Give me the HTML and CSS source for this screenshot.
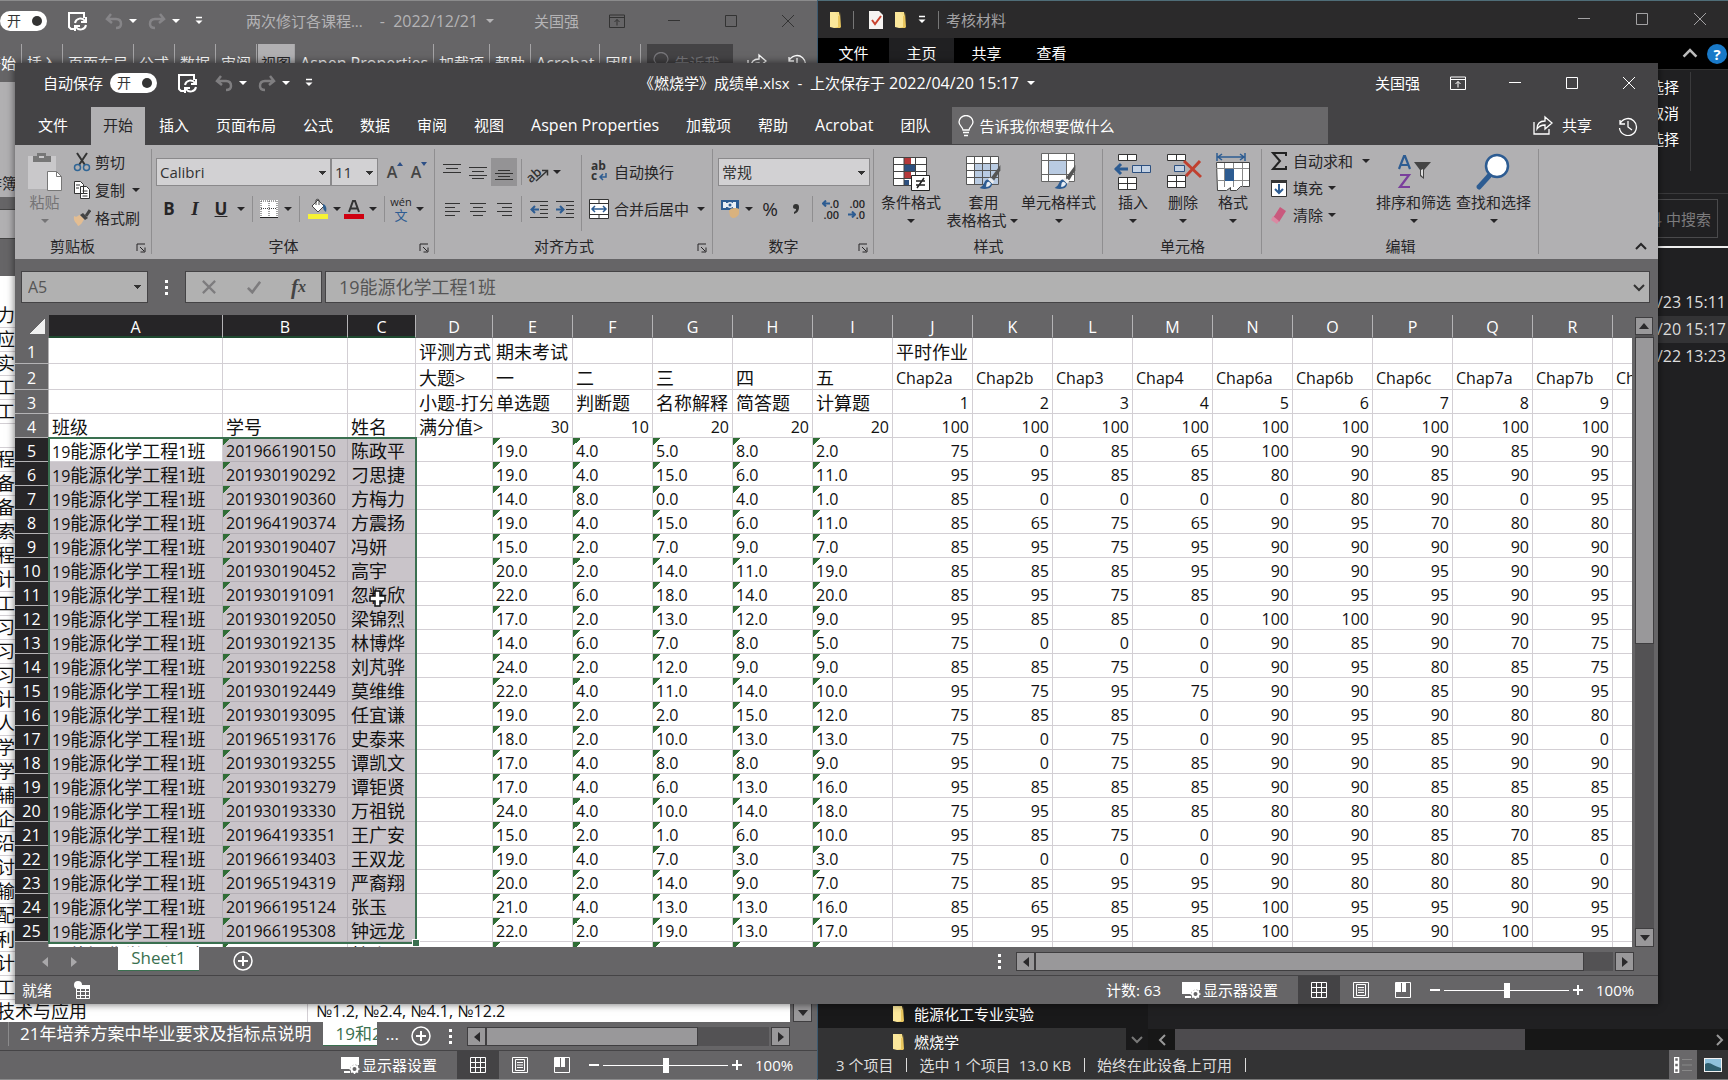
FILE: index.html
```html
<!DOCTYPE html>
<html lang="zh-CN">
<head>
<meta charset="utf-8">
<title>《燃烧学》成绩单.xlsx - Excel</title>
<link rel="stylesheet" href="styles.css">
</head>
<body>
<svg class="defs" aria-hidden="true">
  <symbol id="i-save" viewBox="0 0 20 20"><path d="M8 18H4l-2-2V2h15v5" fill="none" stroke="currentColor" stroke-width="2"/><path d="M8 14v4" stroke="currentColor" stroke-width="2"/><path d="M8 12a5.500 5.500 0 0 1 10-2M19 6v5h-5M19 14a5.500 5.500 0 0 1-10 2M8 20v-5h5" fill="none" stroke="currentColor" stroke-width="2"/></symbol>
  <symbol id="i-undo" viewBox="0 0 18 18"><path d="M6 2 2 7l5 4M2 7h9c4 0 5 3 5 5s-1 4-5 4" fill="none" stroke="currentColor" stroke-width="2.500"/></symbol>
  <symbol id="i-redo" viewBox="0 0 18 18"><path d="m12 2 4 5-5 4M16 7H7c-4 0-5 3-5 5s1 4 5 4" fill="none" stroke="currentColor" stroke-width="2.500"/></symbol>
  <symbol id="i-custom" viewBox="0 0 12 12"><path d="M3 2.500h6" stroke="currentColor" stroke-width="1.500"/><path d="M2.500 5.500h7L6 9z" fill="currentColor"/></symbol>
  <symbol id="i-ropt" viewBox="0 0 16 14"><path d="M.5 1h15v12.500H.5zM.5 3.500h15M8 11.500V5.500M5.500 8 8 5.500 10.500 8" fill="none" stroke="currentColor"/></symbol>
  <symbol id="i-min" viewBox="0 0 14 14"><path d="M1 6.500h12" stroke="currentColor"/></symbol>
  <symbol id="i-max" viewBox="0 0 14 14"><path d="M1.500 1.500h11v11h-11z" fill="none" stroke="currentColor"/></symbol>
  <symbol id="i-close" viewBox="0 0 14 14"><path d="m1 1 12 12M13 1 1 13" stroke="currentColor"/></symbol>
  <symbol id="i-bulb" viewBox="0 0 16 22"><path d="M5 15c0-3-4-4-4-8a7 6.500 0 0 1 14 0c0 4-4 5-4 8zM5 17.500h6M6 20.500h4" fill="none" stroke="currentColor" stroke-width="1.300"/></symbol>
  <symbol id="i-share" viewBox="0 0 20 20"><path d="M1 7v12h15v-5M12 2l7 6-7 6v-4c-4 0-6 1-8 4 0-5 3-8 8-8z" fill="none" stroke="currentColor" stroke-width="1.300"/></symbol>
  <symbol id="i-hist" viewBox="0 0 20 20"><path d="M2 4v4h5M2 8a8.500 8.500 0 1 1-.5 4M10 5v6l4 3" fill="none" stroke="currentColor" stroke-width="1.300"/></symbol>
  <symbol id="i-launch" viewBox="0 0 10 10"><path d="M1 8V1h8M4 4l4 4M9 4.500V9H4.500" fill="none" stroke="currentColor"/></symbol>
  <symbol id="i-plus" viewBox="0 0 20 20"><circle cx="10" cy="10" r="9" fill="none" stroke="currentColor" stroke-width="1.500"/><path d="M10 5v10M5 10h10" stroke="currentColor" stroke-width="2"/></symbol>
  <symbol id="i-disp" viewBox="0 0 20 18"><path d="M1 1h18v8h-2a5 5 0 0 0-7 4H1zM4 15h6v2H4z" fill="currentColor"/><circle cx="14.500" cy="13" r="3" fill="none" stroke="currentColor" stroke-width="2"/><path d="M14.500 8v2m0 6v2m-5-5h2m6 0h2m-8.500-3.500 1.500 1.500m4 4 1.500 1.500m0-7-1.500 1.500m-4 4-1.500 1.500" stroke="currentColor" stroke-width="1.500"/></symbol>
  <symbol id="i-grid" viewBox="0 0 16 16"><path d="M.5.500h15v15H.5zM5.500 0v16M10.500 0v16M0 5.500h16M0 10.500h16" fill="none" stroke="currentColor"/></symbol>
  <symbol id="i-page" viewBox="0 0 16 16"><path d="M.5.500h15v15H.5zM3.500 2.500h9v11h-9zM5 5.500h6M5 8h6M5 10.500h6" fill="none" stroke="currentColor"/></symbol>
  <symbol id="i-break" viewBox="0 0 16 16"><path d="M.5.500h15v15H.5z" fill="none" stroke="currentColor"/><path d="M1 1h5v9H1zM7 1h4v9H7z" fill="currentColor"/></symbol>
  <symbol id="i-folder" viewBox="0 0 14 18"><path d="M1 1h9v15H1z" fill="#f7e08a"/><path d="M6 5h4l1-4 1 15-1 1H5z" fill="#e9c65e"/><path d="M1 1h5l3 4v11l-4 1-4-1z" fill="#fbe79b"/></symbol>
  <symbol id="i-chev" viewBox="0 0 14 14"><path d="m2 9 5-5 5 5" fill="none" stroke="currentColor" stroke-width="2"/></symbol>
  <symbol id="i-brush" viewBox="0 0 22 26"><path d="m21 1-9 12 3 3 6-10z" fill="#555"/><path d="m11 13 4 4-2 2-4-4z" fill="#eee"/><path d="M9 15c-4 0-3 6-8 8 5 2 12 1 12-4z" fill="#2d5c92"/><path d="M10 17c-3 0-2 3-3 5 3 0 4-1 5-3z" fill="#e8eef5"/></symbol>
</svg>

<main class="desktop">

<section class="win back" aria-label="两次修订各课程">
  <header class="title">
    <span class="auto">自动保存</span>
    <button class="toggle" aria-label="自动保存 开">开<i></i></button>
    <button class="q save"><svg><use href="#i-save"/></svg></button>
    <button class="q undo"><svg><use href="#i-undo"/></svg></button><i class="caret"></i>
    <button class="q redo"><svg><use href="#i-redo"/></svg></button><i class="caret"></i>
    <button class="q custom"><svg><use href="#i-custom"/></svg></button>
    <h1><span class="doc">两次修订各课程...</span><span class="lat">-&nbsp; 2022/12/21</span><i class="caret"></i></h1>
    <span class="user">关国强</span>
    <button class="sys"><svg class="wide"><use href="#i-ropt"/></svg></button>
    <button class="sys"><svg><use href="#i-min"/></svg></button>
    <button class="sys"><svg><use href="#i-max"/></svg></button>
    <button class="sys"><svg><use href="#i-close"/></svg></button>
  </header>
  <nav class="tabs">
    <button>文件</button><button>开始</button><button>插入</button><button>页面布局</button><button>公式</button><button>数据</button><button>审阅</button><button class="on">视图</button><button class="lat">Aspen Properties</button><button>加载项</button><button>帮助</button><button class="lat">Acrobat</button><button>团队</button>
    <div class="tell"><svg><use href="#i-bulb"/></svg><span>告诉我</span></div>
    <button class="ico"><svg><use href="#i-share"/></svg></button>
    <button class="ico"><svg><use href="#i-hist"/></svg></button>
  </nav>
  <div class="back-ribbon"><span>作簿</span></div>
  <div class="back-formula"><div></div></div>
  <div class="back-sheet">
    <ul>
      <li>力<li>应<li>实<li>工<li>工<li><li>程<li>备<li>备<li>索<li>程<li>计<li>工<li>习<li>习<li>习<li>计<li>人<li>学<li>学<li>辅<li>企<li>沿<li>讨<li>输<li>配<li>利<li>计<li>工<li class="full"><span>技术与应用</span><span class="codes">№1.2, №2.4, №4.1, №12.2</span>
    </ul>
    <div class="vbar"><button class="arrow down" aria-label="向下"></button></div>
  </div>
  <div class="sheets">
    <button class="sheet plain">21年培养方案中毕业要求及指标点说明</button>
    <button class="sheet cur">19和2</button>
    <span class="dots3">...</span>
    <button class="add"><svg><use href="#i-plus"/></svg></button>
    <i class="grip"></i>
    <div class="hbar"><button class="arrow left" aria-label="向左"></button><div class="track"><i></i></div><button class="arrow right" aria-label="向右"></button></div>
  </div>
  <footer class="status">
    <button class="disp"><svg><use href="#i-disp"/></svg>显示器设置</button>
    <button class="view on"><svg><use href="#i-grid"/></svg></button>
    <button class="view"><svg><use href="#i-page"/></svg></button>
    <button class="view"><svg><use href="#i-break"/></svg></button>
    <button class="zm minus" aria-label="缩小"></button>
    <input type="range" min="0" max="100" value="50" aria-label="缩放">
    <button class="zm add-zoom" aria-label="放大"></button>
    <span class="pct">100%</span>
  </footer>
</section>

<section class="explorer" aria-label="考核材料">
  <header class="x-title">
    <svg class="fold"><use href="#i-folder"/></svg><i class="bar"></i>
    <svg class="doc-check" viewBox="0 0 14 18"><path d="M0 0h10l4 4v14H0z" fill="#f6f4f2"/><path d="m3 9 3 4 6-8" fill="none" stroke="#c8432f" stroke-width="2"/></svg>
    <svg class="fold"><use href="#i-folder"/></svg>
    <svg class="cu"><use href="#i-custom"/></svg><i class="bar"></i>
    <span>考核材料</span>
    <button class="sys"><svg><use href="#i-min"/></svg></button>
    <button class="sys"><svg><use href="#i-max"/></svg></button>
    <button class="sys"><svg><use href="#i-close"/></svg></button>
  </header>
  <nav class="x-tabs"><button>文件</button><button class="on">主页</button><button>共享</button><button>查看</button>
    <svg class="up"><use href="#i-chev"/></svg><b class="help">?</b></nav>
  <div class="x-ribbon"><div><span>全部选择</span><span>全部取消</span><span>反向选择</span></div></div>
  <div class="x-address"><label for="xs" class="sr">搜索</label><input id="xs" placeholder="在 考核材料 中搜索"></div>
  <div class="x-body">
    <div class="x-nav">
      <a href="#"><svg><use href="#i-folder"/></svg>能源化工专业实验</a>
      <a href="#" class="on"><svg><use href="#i-folder"/></svg>燃烧学</a>
      <button class="x-down" aria-label="向下"><svg><use href="#i-chev"/></svg></button>
    </div>
    <div class="x-files">
      <ol><li>2022/12/23 15:11</li><li class="on">2022/04/20 15:17</li><li>2022/12/22 13:23</li></ol>
      <div class="x-scroll"><svg class="l"><use href="#i-chev"/></svg><div><i></i></div><svg class="r"><use href="#i-chev"/></svg></div>
    </div>
  </div>
  <footer class="x-status"><span>3 个项目</span><i></i><span>选中 1 个项目&nbsp; 13.0 KB</span><i></i><span>始终在此设备上可用</span><i></i>
    <button class="on" aria-label="详细信息"><svg viewBox="0 0 18 16"><path d="M.5.500h4v4h-4zM.5 6h4v4h-4zM.5 11.500h4v4h-4z" fill="none" stroke="#fff" stroke-width="1.500"/><path d="M8 2.500h10M8 8h10M8 13.500h10" stroke="#888"/></svg></button>
    <button aria-label="大图标"><svg viewBox="0 0 18 14"><path d="M0 0h18v14H0z" fill="#f2f2f2"/><path d="M1 1h16v12H1z" fill="#8fc1dc"/><path d="M1 6c5-3 8 2 16 4v3H1z" fill="#2f5e6e"/></svg></button>
  </footer>
</section>

<section class="win front" aria-label="《燃烧学》成绩单.xlsx">
  <header class="title">
    <span class="auto">自动保存</span>
    <button class="toggle" aria-label="自动保存 开">开<i></i></button>
    <button class="q save"><svg><use href="#i-save"/></svg></button>
    <button class="q undo"><svg><use href="#i-undo"/></svg></button><i class="caret"></i>
    <button class="q redo"><svg><use href="#i-redo"/></svg></button><i class="caret"></i>
    <button class="q custom"><svg><use href="#i-custom"/></svg></button>
    <h1><span>《燃烧学》成绩单.xlsx&nbsp; -&nbsp; 上次保存于 <span class="lat">2022/04/20 15:17</span></span><i class="caret"></i></h1>
    <span class="user">关国强</span>
    <button class="sys"><svg class="wide"><use href="#i-ropt"/></svg></button>
    <button class="sys"><svg><use href="#i-min"/></svg></button>
    <button class="sys"><svg><use href="#i-max"/></svg></button>
    <button class="sys"><svg><use href="#i-close"/></svg></button>
  </header>
  <nav class="tabs">
    <button class="file">文件</button><button class="on">开始</button><button>插入</button><button>页面布局</button><button>公式</button><button>数据</button><button>审阅</button><button>视图</button><button class="lat">Aspen Properties</button><button>加载项</button><button>帮助</button><button class="lat">Acrobat</button><button>团队</button>
    <div class="tell"><svg><use href="#i-bulb"/></svg><input aria-label="告诉我你想要做什么" placeholder="告诉我你想要做什么"></div>
    <button class="share"><svg><use href="#i-share"/></svg>共享</button>
    <button class="ico"><svg><use href="#i-hist"/></svg></button>
  </nav>

  <div class="ribbon">
    <section class="grp g-clip">
      <div class="body">
        <button class="big dim"><svg viewBox="0 0 34 38"><path d="M0 3h28v33H0z" fill="#c9c8ca"/><path d="M5 3h4V0h9v3h5v6H5z" fill="#777"/><path d="M11 3h5v2h-5z" fill="#c9c8ca"/><path d="M19.500 18.500h9l5 5v14h-14z" fill="#fff" stroke="#777"/><path d="M28.500 18.500v5h5" fill="none" stroke="#777"/></svg><span>粘贴</span><i class="caret"></i></button>
        <div class="stack">
          <button><svg viewBox="0 0 18 20"><path d="m4 1 8 12M14 1 6 13" stroke="#333" stroke-width="2"/><circle cx="4.500" cy="15.500" r="3" fill="none" stroke="#2f6595" stroke-width="1.500"/><circle cx="13.500" cy="15.500" r="3" fill="none" stroke="#2f6595" stroke-width="1.500"/></svg>剪切</button>
          <button><svg viewBox="0 0 18 20"><path d="M1.500 1.500h6l3 3v9h-9zM7.500 6.500h6l3 3v9h-9z" fill="#fff" stroke="#333"/><path d="M3 5h4M3 8h3M9.500 11h5M9.500 13.500h5M9.500 16h5" stroke="#333"/></svg>复制<i class="caret"></i></button>
          <button><svg viewBox="0 0 18 20"><path d="M1 8c3 2 4-1 6-1l4 4c-1 3-4 7-6 7-1-3-5-4-4-10z" fill="#e3bd92"/><path d="m7 7 3-2 5 5-3 2z" fill="#444"/><path d="m13 8 4-6" stroke="#444" stroke-width="3"/></svg>格式刷</button>
        </div>
      </div>
      <h2>剪贴板</h2><button class="launch"><svg><use href="#i-launch"/></svg></button>
    </section>

    <section class="grp g-font">
      <div class="body rows">
        <div class="row"><select class="fontname" aria-label="字体"><option>Calibri</option></select><select class="fontsize" aria-label="字号"><option>11</option></select>
          <button class="t fs">A<svg viewBox="0 0 6 4"><path d="m0 4 3-4 3 4z" fill="#2d4f86"/></svg></button><button class="t fs">A<svg viewBox="0 0 6 4"><path d="m0 0 3 4 3-4z" fill="#2d4f86"/></svg></button></div>
        <div class="row">
          <button class="t w26"><b>B</b></button><button class="t w26"><b class="it">I</b></button><button class="t w26"><b class="un">U</b></button><i class="caret"></i><i class="sep"></i>
          <button class="t"><svg viewBox="0 0 18 18"><path d="M0 0h18v18H0z" fill="#fff"/><path d="M1 1h16v15M1 1v15M9 1v15M1 8.500h16" fill="none" stroke="#444" stroke-dasharray="1 1"/><path d="M0 17.500h18" stroke="#222"/></svg></button><i class="caret"></i><i class="sep"></i>
          <button class="t w28"><svg class="s20" viewBox="0 0 20 20"><path d="m4 7 6-6 6 6-6 6z" fill="#fff" stroke="#444"/><path d="M8 6V1c0-1 3-1 3 0v5" fill="none" stroke="#444"/><path d="M15 5c3 1 4 4 3 8-2-1-3-3-3-6z" fill="#2f5f8f"/><path d="M0 15h20v5H0z" fill="#f7f335"/></svg></button><i class="caret tight"></i>
          <button class="t"><svg class="s20" viewBox="0 0 20 20"><path d="m5 13 4-11h2l4 11M6.500 9.500h7" fill="none" stroke="#333" stroke-width="2"/><path d="M0 15h20v5H0z" fill="#cf0010"/></svg></button><i class="caret"></i><i class="sep"></i>
          <button class="t wen"><small>wén</small><em>文</em></button><i class="caret"></i>
        </div>
      </div>
      <h2>字体</h2><button class="launch"><svg><use href="#i-launch"/></svg></button>
    </section>

    <section class="grp g-align">
      <div class="body">
        <div class="rows">
          <div class="row">
            <button class="t w26"><svg viewBox="0 0 18 18"><path d="M0 1.500h18M3 5.500h12M0 9.500h18" stroke="#333"/></svg></button>
            <button class="t w26"><svg viewBox="0 0 18 18"><path d="M0 4.500h18M3 8.500h12M0 12.500h18M3 15.500h12" stroke="#333"/></svg></button>
            <button class="t w26 on"><svg viewBox="0 0 18 18"><path d="M3 7.500h12M0 10.500h18M3 13.500h12M0 16.500h18" stroke="#333"/></svg></button><i class="sep"></i>
            <button class="t w26"><svg class="s20" viewBox="0 0 20 20"><text x="-3" y="15" font-size="13" font-weight="600" transform="rotate(-42 8 12)" fill="#333">ab</text><path d="m7 19 11-10M13 8.500l5.500 0v5" fill="none" stroke="#333" stroke-width="1.500"/></svg></button><i class="caret tight"></i>
          </div>
          <div class="row">
            <button class="t w26"><svg viewBox="0 0 18 18"><path d="M2 3.500h15M2 7.500h10M2 11.500h15M2 15.500h10" stroke="#333"/></svg></button>
            <button class="t w26"><svg viewBox="0 0 18 18"><path d="M1 3.500h16M4 7.500h10M1 11.500h16M4 15.500h10" stroke="#333"/></svg></button>
            <button class="t w26"><svg viewBox="0 0 18 18"><path d="M2 3.500h15M7 7.500h10M2 11.500h15M7 15.500h10" stroke="#333"/></svg></button><i class="sep"></i>
            <button class="t w26"><svg viewBox="0 0 18 18"><path d="M0 1.500h18M10 5.500h8M10 9.500h8M10 13.500h8M0 17.500h18" stroke="#333"/><path d="M9 9.500H2M5 6 1.500 9.500 5 13" fill="none" stroke="#2d5c92" stroke-width="2"/></svg></button>
            <button class="t w26"><svg viewBox="0 0 18 18"><path d="M0 1.500h18M10 5.500h8M10 9.500h8M10 13.500h8M0 17.500h18" stroke="#333"/><path d="M0 9.500h7M4 6l3.500 3.500L4 13" fill="none" stroke="#2d5c92" stroke-width="2"/></svg></button>
          </div>
        </div>
        <i class="vsep"></i>
        <div class="rows">
          <button class="lab"><svg viewBox="0 0 20 20"><text x="2" y="8" font-size="12" font-weight="bold" fill="#333">ab</text><text x="2" y="18" font-size="12" font-weight="bold" fill="#333">c</text><path d="M17 11v4h-6m3-3-3 3 3 3" fill="none" stroke="#2d5c92" stroke-width="1.500"/></svg>自动换行</button>
          <button class="lab"><svg viewBox="0 0 20 20"><path d="M.5.500h19v19H.5zM0 4.500h20M0 15.500h20M10 0v4M10 16v4" fill="#fff" stroke="#333"/><path d="M3 10h14M6 7l-3 3 3 3M14 7l3 3-3 3" fill="none" stroke="#2d5c92" stroke-width="1.500"/></svg>合并后居中<i class="caret"></i></button>
        </div>
      </div>
      <h2>对齐方式</h2><button class="launch"><svg><use href="#i-launch"/></svg></button>
    </section>

    <section class="grp g-num">
      <div class="body rows">
        <div class="row"><select class="numfmt" aria-label="数字格式"><option>常规</option></select></div>
        <div class="row">
          <button class="t"><svg class="s20" viewBox="0 0 20 20"><path d="M1 1h18v10H1z" fill="#2d5c92"/><path d="M3 3h3v1h7V3h3v6h-3V8H6v1H3z" fill="#e8eef5"/><circle cx="10" cy="6" r="3" fill="#e8eef5"/><circle cx="10" cy="6" r="1.500" fill="#2d5c92"/><path d="M9 12c2-4 8-3 10-2v5c-3 5-7 5-9 2z" fill="#d9b27e"/></svg></button><i class="caret"></i>
          <button class="t w28 pc">%</button><button class="t" aria-label="千位分隔样式"><svg viewBox="0 0 18 18"><path d="M6 7a3 3 0 0 1 6 0c0 4-2 6-5 7v-2c2-1 2-2 2-3-2 0-3-1-3-2z" fill="#333"/></svg></button><i class="sep"></i>
          <button class="t w26 dec"><span><svg viewBox="0 0 8 7"><path d="M8 3.500H1M4 .5l-3 3 3 3" fill="none" stroke="#2d5c92" stroke-width="2"/></svg>.0</span><span>.00</span></button>
          <button class="t w26 dec"><span>.00</span><span><svg viewBox="0 0 8 7"><path d="M0 3.500h7M4 .5l3 3-3 3" fill="none" stroke="#2d5c92" stroke-width="2"/></svg>.0</span></button>
        </div>
      </div>
      <h2>数字</h2><button class="launch"><svg><use href="#i-launch"/></svg></button>
    </section>

    <section class="grp g-style">
      <div class="body">
        <button class="big w60"><svg viewBox="0 0 38 38"><path d="M1.500 4.500h33v28h-33z" fill="#fff"/><path d="M12 4h7v7h-7zM12 19h7v7h-7z" fill="#b5383a"/><path d="M12 12h11v7H12zM12 27h5v6h-5z" fill="#2d5080"/><path d="M1.500 4.500h33v28h-33zM1 11.500h33M1 18.500h33M1 25.500h33M12 4v29M23.500 4v29" fill="none" stroke="#444"/><path d="M19.500 22.500h18v15h-18z" fill="#fff" stroke="#222"/><path d="M24 28h9M24 32h9M32 25l-7 10" stroke="#222" stroke-width="1.500"/></svg><span>条件格式</span><i class="caret"></i></button>
        <button class="big w75"><svg viewBox="0 0 38 38"><path d="M1.500 3.500h32v28h-32z" fill="#fff"/><path d="M10 10h23v21H10z" fill="#b9cbe2"/><path d="M1.500 3.500h32v28h-32zM1 10.500h32M1 17.500h32M1 24.500h32M9.500 3v28M17.500 3v28M25.500 3v28" fill="none" stroke="#555"/><svg x="12" y="11" width="26" height="27"><use href="#i-brush"/></svg></svg><span>套用</span><span class="l2">表格格式<i class="caret"></i></span></button>
        <button class="big w75 nogap"><svg viewBox="0 0 38 38"><path d="M1.500.500h33v28h-33z" fill="#fff"/><path d="M9 8h17v13H9z" fill="#b9cbe2"/><path d="M1.500.500h33v28h-33zM1 7.500h33M1 21.500h33M8.500 0v29M26.500 0v29" fill="none" stroke="#666"/><svg x="12" y="11" width="26" height="27"><use href="#i-brush"/></svg></svg><span>单元格样式</span><i class="caret"></i></button>
      </div>
      <h2>样式</h2>
    </section>

    <section class="grp g-cells">
      <div class="body">
        <button class="big w50"><svg viewBox="0 0 38 38"><path d="M4.500 1.500h18v6h-18zM13.500 1.500v6M4.500 24.500h18v12h-18zM4.500 30.500h18M13.500 24.500v12" fill="#fff" stroke="#333"/><path d="M18.500 12.500h18v7h-18zM27.500 12.500v7" fill="#c4d2e4" stroke="#2d5080"/><path d="M1 16h13M7 11l-5 5 5 5" fill="none" stroke="#2d5c92" stroke-width="3"/></svg><span>插入</span><i class="caret"></i></button>
        <button class="big w50"><svg viewBox="0 0 38 38"><path d="M3.500 1.500h18v6h-18zM12.500 1.500v6M3.500 22.500h18v12h-18zM3.500 28.500h18M12.500 22.500v12" fill="#fff" stroke="#333"/><path d="M10.500 12.500h10v6h-10z" fill="#c4d2e4" stroke="#2d5080"/><path d="m20 8 17 16M36 8 22 23" stroke="#c0402f" stroke-width="3"/></svg><span>删除</span><i class="caret"></i></button>
        <button class="big w50"><svg viewBox="0 0 38 38"><path d="M3 4h28M3 0v8M31 0v8M8 1 4 4l4 3M26 1l4 3-4 3" fill="none" stroke="#2d5c92" stroke-width="1.500"/><path d="M2.500 9.500h33v24h-9l-4 4h-6v-3l-4 3h-9z" fill="#fff" stroke="#444"/><path d="M2 15.500h33M2 27.500h33M10.500 10v24M19.500 10v24M28.500 10v24" stroke="#888"/><path d="M11 16h9v12h-9z" fill="#2d5c92"/></svg><span>格式</span><i class="caret"></i></button>
      </div>
      <h2>单元格</h2>
    </section>

    <section class="grp g-edit">
      <div class="body">
        <div class="stack">
          <button><svg viewBox="0 0 18 20"><path d="M16 5V2H3l7 8-7 8h13v-3" fill="none" stroke="#222" stroke-width="2"/></svg>自动求和<i class="caret far"></i></button>
          <button><svg viewBox="0 0 18 20"><path d="M1.500 2.500h15v16h-15z" fill="#fff" stroke="#333"/><path d="M1 2h16v3H1z" fill="#333"/><path d="M9 6v9M5 11l4 4 4-4" fill="none" stroke="#2d5c92" stroke-width="2"/></svg>填充<i class="caret"></i></button>
          <button><svg viewBox="0 0 18 20"><path d="m10 2 6 4-7 11-6-4z" fill="#c9597d"/><path d="m3 11 6 5-2 3-6-4z" fill="#d98aa3"/></svg>清除<i class="caret"></i></button>
        </div>
        <button class="big w75"><svg viewBox="0 0 38 38"><path d="m4 16 5-13h1l5 13M6 12h7" fill="none" stroke="#2d5c92" stroke-width="2.200"/><path d="M5 22h9L5 34h10" fill="none" stroke="#7a3f9c" stroke-width="2.200"/><path d="M19 9h17l-7 8v9l-4-3v-6z" fill="#444"/><path d="m26 17 2-1v8l-2-2z" fill="#ddd"/></svg><span>排序和筛选</span><i class="caret"></i></button>
        <button class="big w75"><svg viewBox="0 0 38 38"><path d="M14 23 4 34" stroke="#2d5c92" stroke-width="5" stroke-linecap="round"/><circle cx="22" cy="13" r="11" fill="#fff" stroke="#2d5c92" stroke-width="2.500"/></svg><span>查找和选择</span><i class="caret"></i></button>
      </div>
      <h2>编辑</h2>
    </section>
    <button class="collapse" aria-label="折叠功能区"><svg><use href="#i-chev"/></svg></button>
  </div>

  <div class="formula">
    <select class="namebox" aria-label="名称框"><option>A5</option></select>
    <i class="grip"></i>
    <div class="fx">
      <button aria-label="取消"><svg viewBox="0 0 16 16"><path d="m1 1 14 14M15 1 1 15" stroke="#7d7c7e" stroke-width="2.500"/></svg></button>
      <button aria-label="输入"><svg viewBox="0 0 16 16"><path d="m1 9 5 5L15 2" fill="none" stroke="#7d7c7e" stroke-width="3"/></svg></button>
      <button class="fxi" aria-label="插入函数">f<sub>x</sub></button>
    </div>
    <div class="fbox"><input aria-label="编辑栏" value="19能源化学工程1班"><svg><use href="#i-chev"/></svg></div>
  </div>

  <div class="sheetarea">
    <div class="gridwrap">
      <table class="cells">
        <colgroup><col class="c-h"><col class="c-a"><col class="c-b"><col class="c-c"><col class="c-d"><col span="14" class="c-n"><col class="c-s"></colgroup>
        <thead><tr id="heads"></tr></thead>
        <tbody id="rows"></tbody>
      </table>
      <div class="selection"><i></i></div>
      <svg class="pointer" viewBox="0 0 18 18"><path d="M6 1h5v5h5v5h-5v5H6v-5H1V6h5z" fill="#fff" stroke="#111" stroke-width="1.500"/></svg>
    </div>
    <div class="vbar"><button class="arrow up" aria-label="向上"></button><div class="track"><i></i></div><button class="arrow down" aria-label="向下"></button></div>
  </div>

  <div class="sheets">
    <button class="nav prev" aria-label="上一张"></button><button class="nav next" aria-label="下一张"></button>
    <button class="sheet cur">Sheet1</button>
    <button class="add"><svg><use href="#i-plus"/></svg></button>
    <i class="grip"></i>
    <div class="hbar"><button class="arrow left" aria-label="向左"></button><div class="track"><i></i></div><button class="arrow right" aria-label="向右"></button></div>
  </div>
  <footer class="status">
    <span>就绪</span>
    <svg class="rec" viewBox="0 0 16 18"><path d="M2.500 5.500h13v12h-13z" fill="none" stroke="#fff"/><path d="M2 4h14v4H2z" fill="#fff"/><circle cx="4" cy="4" r="4" fill="#fff"/><path d="M3 10.500h12M3 14.500h12M6.500 8v10M11.500 8v10" stroke="#fff"/></svg>
    <span class="count">计数: 63</span>
    <button class="disp"><svg><use href="#i-disp"/></svg>显示器设置</button>
    <button class="view on"><svg><use href="#i-grid"/></svg></button>
    <button class="view"><svg><use href="#i-page"/></svg></button>
    <button class="view"><svg><use href="#i-break"/></svg></button>
    <button class="zm minus" aria-label="缩小"></button>
    <input type="range" min="0" max="100" value="50" aria-label="缩放">
    <button class="zm add-zoom" aria-label="放大"></button>
    <span class="pct">100%</span>
  </footer>
</section>
</main>
<script src="script.js"></script>
</body>
</html>
```
FILE: styles.css
```css
* { box-sizing: border-box; }
:root {
  --dark: #444345;
  --mid: #666567;
  --light: #b1b0b2;
  --ink: #262527;
  --green: #3a7050;
  --line: #d3cfd4;
}
html, body { height: 100%; margin: 0; }
body { font: 15px/20px "Open Sans", "Noto Sans CJK SC", sans-serif; color: #fff; overflow: hidden; background: #202022; }
button, input, select { font: inherit; color: inherit; background: none; border: 0; padding: 0; margin: 0; border-radius: 0; }
button { display: flex; align-items: center; justify-content: center; white-space: nowrap; flex: none; }
h1, h2 { font: inherit; margin: 0; }
ul, ol { list-style: none; margin: 0; padding: 0; }
svg { display: block; flex: none; }
i { font-style: normal; flex: none; }
.lat { font-size: 16px; }
.defs { position: absolute; width: 0; height: 0; }
.sr { position: absolute; width: 1px; height: 1px; overflow: hidden; opacity: 0; }
.desktop { position: relative; height: 100%; overflow: hidden; }

.caret { width: 14px; height: 14px; display: inline-flex; align-items: center; justify-content: center; }
.caret::before { content: ""; border: 4px solid transparent; border-top-color: currentColor; border-bottom: 0; }
.caret.tight { width: 10px; }

/* Excel windows */
.win { position: absolute; display: flex; flex-direction: column; background: var(--mid); }
.front { left: 15px; right: 70px; top: 63px; bottom: 76px; box-shadow: 0 0 8px rgba(0,0,0,.6); }
.back { left: -95px; right: 911px; top: 0; bottom: 0; border-top: 1px solid #8b8b8c; }
.front .title, .front .tabs { background: var(--dark); }

.title { display: flex; align-items: center; height: 44px; padding: 0 1px 4px 28px; flex: none; }
.back .title { height: 43px; padding-bottom: 4px; }
.auto { width: 60px; margin-right: 7px; }
.toggle { width: 47px; height: 20px; border-radius: 10px; background: #fff; color: #333; justify-content: space-between; padding: 0 5px 0 7px; font-size: 14px; }
.toggle i { width: 10px; height: 10px; border-radius: 5px; background: #333; }
.q svg { width: 18px; height: 18px; }
.q.save { margin: 0 18px 0 20px; }
.q.save svg { width: 20px; height: 20px; }
.q.undo, .q.redo { margin-right: 3px; }
.q.redo { margin-left: 8px; }
.q.custom { margin-left: 10px; }
.q.custom svg { width: 12px; height: 12px; }
.undo, .redo { color: #7f7e80; }
.back .undo, .back .redo { color: #868588; }
.title h1 { flex: 1; display: flex; align-items: center; justify-content: center; gap: 5px; white-space: nowrap; padding-right: 13px; }
.doc { margin-right: 12px; }
.back h1 { padding: 0 0 0 4px; }
.back h1, .back .user { color: #b4b3b5; }
.back .title .sys { color: #333; }
.user { margin-right: 9px; }
.sys { width: 57px; height: 30px; }
.sys svg { width: 14px; height: 14px; }
.sys svg.wide { width: 16px; }

.tabs { display: flex; height: 38px; flex: none; align-items: stretch; }
.tabs > button { padding: 0 13px 3px; margin-right: 1px; }
.tabs > button.file { width: 76px; margin: 0; }
.tabs > button.on { background: var(--light); color: var(--ink); padding: 0 12px 3px; }
.tell { display: flex; align-items: center; gap: 5px; background: #69686a; padding-left: 6px; height: 37px; margin: 0 205px 0 8px; flex: 1; }
.tell svg { width: 16px; height: 22px; }
.tell input { flex: 1; min-width: 0; }
::placeholder { color: inherit; opacity: 1; }
.tabs .share { gap: 9px; padding: 0 0 2px; margin-right: 26px; }
.share svg, .ico svg { width: 20px; height: 20px; }
.tabs .ico { padding: 0; margin-right: 20px; }
.back .tabs > button:not(.ico) { padding: 0 5px 1px; margin: 0; border-right: 1px solid #a5a4a6; }
.back .tabs > button:nth-child(1) { padding: 0 20px 1px 22px; }
.back .tabs > button:nth-child(2) { padding: 0 5px 1px 8px; }
.back .tabs > button.on { padding: 0 3px 1px; margin-left: 1px; }
.back .tell { flex: none; width: 86px; margin: 0 14px 0 6px; background: #444345; color: #77767a; }
.back .tabs .ico:last-child { margin: 0; }

.back-ribbon { height: 115px; background: var(--light); color: var(--ink); display: flex; align-items: flex-end; padding: 0 0 4px 82px; flex: none; }
.back-formula { height: 79px; padding: 12px 0 37px; flex: none; }
.back-formula div { height: 30px; background: var(--light); border: 1px solid #444; }
.back-sheet { flex: 1; min-height: 0; display: flex; color: #111; font-size: 18px; line-height: 23px; }
.back-sheet ul { flex: 1; background: #fff; padding: 28px 0 0 92px; overflow: hidden; }
.back-sheet li { height: 24px; border-bottom: 1px solid var(--line); }
.back-sheet .full { display: flex; }
.full span:first-child { width: 311px; border-right: 1px solid var(--line); }
.codes { padding-left: 8px; font-size: 16px; }
.back-sheet .vbar { justify-content: flex-end; padding: 0 0 0 3px; width: 27px; margin: 0; }

/* Ribbon */
.ribbon { display: flex; height: 114px; background: var(--light); color: var(--ink); flex: none; position: relative; }
.grp { position: relative; display: grid; grid-template-rows: 88px 20px; flex: none; }
.grp::after { content: ""; position: absolute; right: 0; top: 4px; bottom: 5px; width: 1px; background: #8f8e90; }
.grp h2 { text-align: center; padding-top: 3px; }
.g-clip { width: 137px; } .g-clip h2 { padding-right: 22px; }
.g-font { width: 283px; } .g-font h2 { padding-right: 20px; }
.g-align { width: 278px; } .g-align h2 { padding-right: 20px; }
.g-num { width: 161px; } .g-num h2 { padding-right: 20px; }
.g-style { width: 229px; }
.g-cells { width: 159px; }
.g-edit { width: 277px; }
.body { display: flex; padding-left: 4px; }
.g-clip .body { padding-left: 3px; }
.g-num .body { padding-left: 5px; }
.g-style .body { padding-left: 7px; gap: 5px; }
.g-cells .body { padding-left: 5px; }
.g-edit .body { padding-left: 6px; gap: 5px; }
.launch { position: absolute; right: 6px; bottom: 6px; }
.launch svg { width: 10px; height: 10px; }
.rows { display: flex; flex-direction: column; gap: 9px; padding-top: 13px; }
.row { display: flex; align-items: center; height: 28px; }
.stack { display: flex; flex-direction: column; padding-top: 3px; }
.stack button { height: 28px; justify-content: flex-start; gap: 4px; }
.stack svg { width: 18px; height: 20px; margin-left: 2px; }
.g-edit .stack { width: 103px; padding-top: 2px; }
.g-edit .stack button { height: 27px; gap: 5px; }
.g-edit .caret { width: 8px; }
.stack .caret.far { margin-left: 4px; }
.big { flex-direction: column; justify-content: flex-start; padding-top: 8px; width: 53px; }
.big > svg { width: 38px; height: 38px; margin-bottom: 1px; }
.big > .caret { height: 18px; }
.l2 { line-height: 17px; display: flex; align-items: center; }
.dim { color: #757476; }
.w60 { width: 60px; } .w75 { width: 75px; } .w50 { width: 50px; }
.nogap { margin-left: -5px; }
.t { width: 24px; height: 28px; position: relative; }
.t svg { width: 18px; height: 18px; }
.t svg.s20 { width: 20px; height: 20px; overflow: visible; }
.t.w26 { width: 26px; } .t.w28 { width: 28px; }
.t.on { background: #949395; }
.t.fs { font-size: 16px; font-weight: 600; color: #444; }
.t.fs svg { width: 6px; height: 4px; align-self: flex-start; margin-top: 4px; }
.row select + .t.fs { margin-left: 5px; }
.t b { font-size: 17px; }
.t b.it { font: italic bold 19px "Liberation Serif", serif; }
.un { text-decoration: underline; }
.sep { width: 1px; height: 26px; margin: 0 4px; background: #8f8e90; }
.vsep { width: 1px; height: 76px; margin: 10px 7px 0 3px; background: #8f8e90; }
.wen { flex-direction: column; line-height: 12px; }
.wen small { font-size: 11px; }
.wen em { font-style: normal; color: #2d5c92; font-size: 13px; line-height: 14px; }
.lab { height: 28px; justify-content: flex-start; gap: 5px; }
.lab svg { width: 20px; height: 20px; overflow: visible; }
.pc { font-size: 19px; }
.dec { flex-direction: column; font-size: 11px; line-height: 11px; align-items: flex-end; padding-right: 4px; font-weight: 600; }
.dec span { display: flex; align-items: center; }
.dec svg { width: 8px; height: 7px; }
select { appearance: none; padding: 0 3px; height: 28px; border: 1px solid #8a898b; color: #333; background-color: #d2d1d3;
  background-image: linear-gradient(#333, #333), linear-gradient(#333, #333), linear-gradient(#333, #333), linear-gradient(#333, #333);
  background-repeat: no-repeat;
  background-size: 7px 1px, 5px 1px, 3px 1px, 1px 1px;
  background-position: right 4px top 12px, right 5px top 13px, right 6px top 14px, right 7px top 15px;
}
.fontname { width: 175px; } .fontsize { width: 47px; }
.numfmt { width: 152px; }
.collapse { position: absolute; right: 10px; bottom: 5px; }
.collapse svg { width: 14px; height: 14px; }

/* Formula bar */
.formula { display: flex; height: 56px; padding: 12px 8px 12px 6px; color: #555; flex: none; }
.formula .namebox { width: 127px; height: 32px; background-color: #b1b1b1; border-color: var(--dark); color: #555; padding-left: 6px; font-size: 16px;
  background-position: right 6px top 13px, right 7px top 14px, right 8px top 15px, right 9px top 16px; }
.grip { width: 3px; height: 15px; align-self: center; background: repeating-linear-gradient(#fff 0 3px, transparent 3px 6px); }
.formula .grip { margin: 0 17px; }
.fx, .fbox { display: flex; border: 1px solid var(--dark); background: #b1b1b1; height: 32px; }
.fx { width: 137px; margin-right: 3px; }
.fx button { width: 45px; }
.fx svg { width: 14px; height: 14px; }
.fxi { font: italic bold 21px "Liberation Serif", serif; color: #444; }
.fxi sub { font-size: 16px; line-height: 1; }
.fbox { flex: 1; align-items: center; padding: 0 3px 0 13px; }
.fbox input { flex: 1; font-size: 18px; }
.fbox svg { width: 14px; height: 14px; transform: rotate(180deg); color: #333; }

/* Grid */
.sheetarea { flex: 1; min-height: 0; display: flex; }
.gridwrap { flex: 1; min-width: 0; overflow: hidden; position: relative; background: linear-gradient(var(--mid) 23px, #fff 23px); }
.cells { table-layout: fixed; width: 1634px; border-collapse: separate; border-spacing: 0; color: #111; }
.c-h { width: 34px; } .c-a { width: 174px; } .c-b { width: 125px; } .c-c { width: 68px; } .c-d { width: 77px; }
.c-n { width: 80px; } .c-s { width: 36px; }
.cells th, .cells td { height: 24px; padding: 3px 3px 0; line-height: 20px; overflow: hidden; white-space: nowrap; border: solid var(--line); border-width: 0 1px 1px 0; }
.cells th { background: var(--mid); color: #fff; font-weight: 400; font-size: 16px; text-align: center; padding: 3px 0 0; border-color: #b4b3b5; }
.cells thead th { height: 23px; line-height: 19px; border-bottom-color: var(--mid); }
.cells thead th.sel { background: linear-gradient(var(--ink) 21px, #1f4a30 21px); border-bottom-color: #1f4a30; }
.cells tbody th.sel { background: var(--ink); border-right-color: var(--green); }
.cells .corner { background: linear-gradient(135deg, transparent 50%, #f0f0f0 50%) right 3px bottom 3px / 16px 15px no-repeat var(--mid); border-right-color: var(--mid); }
.cells .tall th, .cells .tall td { height: 26px; line-height: 22px; }
.cells td { font-size: 18px; }
.cells td.n, .cells .d { font-size: 16px; }
.cells .d { line-height: 1; }
.cells td.r { text-align: right; }
.cells td.sel { background-color: #c9c4c9; border-color: #b5b0b6; }
.cells td.tri { background-image: linear-gradient(135deg, #2f6d35 50%, transparent 50%); background-size: 8px 8px; background-repeat: no-repeat; }
.selection { position: absolute; left: 33px; top: 122px; width: 369px; height: 507px; border: 2px solid var(--green); pointer-events: none; }
.selection i { position: absolute; right: -4px; bottom: -4px; width: 6px; height: 6px; background: var(--green); outline: 1px solid #fff; }
.pointer { position: absolute; left: 354px; top: 275px; width: 18px; height: 18px; }

.arrow { width: 19px; height: 19px; background: #99989a; border: 1px solid #3f3e40; }
.arrow::before { content: ""; border: 5px solid transparent; }
.up::before { border-bottom: 6px solid #2a292b; border-top: 0; }
.down::before { border-top: 6px solid #2a292b; border-bottom: 0; }
.left::before { border-right: 6px solid #2a292b; border-left: 0; }
.right::before { border-left: 6px solid #2a292b; border-right: 0; }
.vbar { display: flex; flex-direction: column; width: 19px; margin: 2px 4px 0 3px; flex: none; }
.vbar .track { flex: 1; background: #535254; padding-top: 2px; }
.vbar .track i { display: block; height: 52%; background: #99989a; border: 1px solid #3f3e40; }

.sheets { display: flex; height: 29px; border-bottom: 1px solid #454446; flex: none; }
.sheet { height: 24px; font-size: 17px; padding: 0 12px; }
.sheet.cur { background: #fff; color: var(--green); border-bottom: 1px solid var(--green); }
.front .sheet { width: 81px; font-size: 17px; padding: 0 0 2px; }
.nav { width: 29px; height: 29px; }
.nav::before { content: ""; border: 5px solid transparent; }
.prev { margin-left: 15px; }
.next { margin-right: 30px; }
.prev::before { border-right: 6px solid #a9a8aa; border-left: 0; }
.next::before { border-left: 6px solid #a9a8aa; border-right: 0; }
.add { margin-left: 34px; height: 28px; }
.add svg { width: 20px; height: 20px; }
.sheets .grip { margin: 0 15px 0 auto; }
.hbar { display: flex; height: 19px; margin: 5px 24px 0 0; width: 618px; }
.hbar .track { flex: 1; background: #535254; margin-right: 2px; }
.hbar .track i { display: block; height: 19px; width: 95%; background: #99989a; border: 1px solid #3f3e40; }
.back .plain { margin-left: 103px; padding: 0 12px 0 11px; border-left: 1px solid #8b8b8c; }
.back .sheet.cur { width: 54px; justify-content: flex-start; overflow: hidden; padding: 0 0 0 12px; }
.dots3 { margin: 2px 0 0 8px; font-size: 17px; }
.back .add { margin-left: 12px; }
.back .hbar { width: 323px; margin-right: 27px; }
.back .hbar .track i { width: 75%; }

.status { display: flex; align-items: center; height: 28px; padding: 0 23px 0 7px; flex: none; }
.back .status { justify-content: flex-end; height: 29px; border-bottom: 1px solid #8b8b8c; }
.rec { width: 16px; height: 18px; margin-left: 22px; }
.count { margin-left: auto; margin-right: 20px; }
.disp { gap: 2px; margin-right: 20px; }
.disp svg { width: 20px; height: 18px; }
.view { width: 42px; height: 28px; }
.view svg { width: 16px; height: 16px; }
.view.on { background: var(--dark); }
.zm { width: 10px; height: 10px; background: linear-gradient(#fff, #fff) center / 10px 2px no-repeat; }
.minus { margin: 0 4px 0 6px; }
.add-zoom { margin: 0 13px 0 4px; background: linear-gradient(#fff, #fff) center / 10px 2px no-repeat, linear-gradient(#fff, #fff) center / 2px 10px no-repeat; }
.pct { width: 39px; white-space: nowrap; }
input[type=range] { appearance: none; width: 125px; height: 15px; background: linear-gradient(#fff, #fff) center / 100% 1px no-repeat; }
input[type=range]::-webkit-slider-thumb { appearance: none; width: 6px; height: 15px; background: #fff; }

/* File explorer */
.explorer { position: absolute; left: 817px; right: 0; top: 0; bottom: 0; display: flex; flex-direction: column; background: #202022; border-top: 1px solid #4f6d78; border-left: 1px solid #3d5a70; }
.x-title { height: 37px; background: #2b2a2b; display: flex; align-items: center; padding-left: 11px; flex: none; }
.x-title > span { flex: 1; color: #a3a2a4; margin-left: 7px; }
.x-title .sys { width: 58px; color: #a3a2a4; padding-bottom: 2px; }
.x-title .sys:last-child { width: 57px; }
.fold { width: 14px; height: 18px; }
.bar { width: 1px; height: 18px; background: #777; margin-left: 10px; }
.doc-check { width: 14px; height: 18px; margin: 0 11px 0 15px; }
.cu { width: 12px; height: 12px; margin-left: 8px; }
.x-tabs { height: 31px; background: #000; display: flex; align-items: center; flex: none; }
.x-tabs button { width: 65px; height: 31px; padding-bottom: 2px; }
.x-tabs button:first-child { width: 71px; }
.x-tabs .on { background: #202022; }
.up { width: 18px; height: 18px; margin: 0 8px 0 auto; color: #bbb; }
.help { width: 20px; height: 20px; border-radius: 10px; background: #1979c8; text-align: center; line-height: 20px; margin-right: 1px; }
.x-ribbon { height: 125px; border-top: 1px solid #333; border-bottom: 1px solid #3a3a3c; display: flex; justify-content: flex-end; padding: 2px 37px 22px 0; flex: none; }
.x-ribbon div { display: flex; flex-direction: column; gap: 6px; padding: 5px 11px 0 0; border-right: 1px solid #3a3a3c; }
.x-address { height: 54px; border-bottom: 2px solid #eee; padding: 5px 10px; display: flex; justify-content: flex-end; flex: none; }
.x-address input { width: 220px; height: 39px; border: 1px solid #4a4a4c; color: #7c7b7d; text-align: right; padding-right: 6px; }
.x-body { flex: 1; min-height: 0; display: flex; }
.x-nav { width: 330px; position: relative; display: flex; flex-direction: column; justify-content: flex-end; background: #19191a; padding-right: 22px; overflow: hidden; }
.x-nav a { display: flex; align-items: center; gap: 8px; height: 29px; color: inherit; text-decoration: none; padding-left: 74px; flex: none; }
.x-nav a svg { width: 14px; height: 18px; }
.x-nav a.on { background: #333334; height: 22px; padding-top: 6px; }
.x-down { position: absolute; right: 4px; bottom: 4px; color: #777; }
.x-down svg { width: 14px; height: 14px; transform: rotate(180deg); }
.x-files { flex: 1; display: flex; flex-direction: column; justify-content: space-between; }
.x-files ol { padding-top: 41px; color: #ddd; }
.x-files li { height: 27px; text-align: right; line-height: 27px; padding-right: 2px; font-size: 16px; }
.x-files li.on { background: #333335; }
.x-scroll { height: 21px; background: #171717; display: flex; align-items: center; padding: 0 2px 0 8px; color: #999; }
.x-scroll svg { width: 14px; height: 14px; }
.x-scroll div { flex: 1; margin: 0 6px 0 5px; }
.x-scroll div i { display: block; width: 66%; height: 21px; background: #4d4b4e; }
.x-scroll .l { transform: rotate(-90deg); } .x-scroll .r { transform: rotate(90deg); }
.x-status { height: 30px; background: #333334; color: #ddd; display: flex; align-items: center; padding-left: 18px; border-bottom: 1px solid #777; flex: none; }
.x-status i { width: 1px; height: 14px; background: #ddd; margin: 0 12px 0 13px; }
.x-status button { width: 31px; height: 29px; }
.x-status button svg { width: 18px; height: 16px; }
.x-status button.on { width: 28px; background: #69686a; margin-left: auto; }
```
FILE: script.js
```js
const letters = "ABCDEFGHIJKLMNOPQRS".split("");
const data = [
  ["201966190150", "陈政平", "19 4 5 8 2", "75 0 85 65 100 90 90 85 90"],
  ["201930190292", "刁思捷", "19 4 15 6 11", "95 95 85 85 80 90 85 90 95"],
  ["201930190360", "方梅力", "14 8 0 4 1", "85 0 0 0 0 80 90 0 95"],
  ["201964190374", "方震扬", "19 4 15 6 11", "85 65 75 65 90 95 70 80 80"],
  ["201930190407", "冯妍", "15 2 7 9 7", "85 95 75 95 90 90 90 90 90"],
  ["201930190452", "高宇", "20 2 14 11 19", "85 85 85 95 90 90 95 90 90"],
  ["201930191091", "忽籽欣", "22 6 18 14 20", "85 95 75 85 90 95 95 90 95"],
  ["201930192050", "梁锦烈", "17 2 13 12 9", "95 85 85 0 100 100 90 90 95"],
  ["201930192135", "林博烨", "14 6 7 8 5", "75 0 0 0 90 85 90 70 75"],
  ["201930192258", "刘芃骅", "24 2 12 9 9", "85 85 75 0 90 95 80 85 75"],
  ["201930192449", "莫维维", "22 4 11 14 10", "95 75 95 75 90 90 85 90 95"],
  ["201930193095", "任宜谦", "19 2 2 15 12", "75 85 85 0 90 95 90 80 80"],
  ["201965193176", "史泰来", "18 2 10 13 13", "75 0 75 0 90 95 85 90 0"],
  ["201930193255", "谭凯文", "17 4 8 8 9", "95 0 75 85 90 90 85 90 90"],
  ["201930193279", "谭钜贤", "17 4 6 13 16", "95 85 85 85 90 90 85 85 85"],
  ["201930193330", "万祖锐", "24 4 10 14 18", "75 95 85 85 80 80 80 80 95"],
  ["201964193351", "王广安", "15 2 1 6 10", "95 85 75 0 90 90 85 70 85"],
  ["201966193403", "王双龙", "19 4 7 3 3", "75 0 0 0 90 95 80 85 0"],
  ["201965194319", "严裔翔", "20 2 14 9 7", "75 85 95 95 90 80 80 80 90"],
  ["201966195124", "张玉", "21 4 13 13 16", "85 65 85 95 100 95 95 90 95"],
  ["201966195308", "钟远龙", "22 2 19 13 17", "95 95 95 85 100 95 90 100 95"],
  ["201966195421", "韩欢", "20 2 14 9 7", "85 85 95 95 90 80 80 80 90"]
];
const top4 = [
  ["", "", "", "评测方式", "期末考试", "", "", "", "", "平时作业", "", "", "", "", "", "", "", "", ""],
  ["", "", "", "大题>", "一", "二", "三", "四", "五", "Chap2a", "Chap2b", "Chap3", "Chap4", "Chap6a", "Chap6b", "Chap6c", "Chap7a", "Chap7b", "Chap8"],
  ["", "", "", "小题-打分", "单选题", "判断题", "名称解释", "简答题", "计算题", "1", "2", "3", "4", "5", "6", "7", "8", "9", ""],
  ["班级", "学号", "姓名", "满分值>", "30", "10", "20", "20", "20", ...Array(9).fill("100"), ""]
];
const cell = (text, cls = "") => `<td class="${cls}">${text}</td>`;

document.getElementById("heads").innerHTML = `<th class="corner"></th>` +
  letters.map((l, i) => `<th scope="col" class="${i < 3 ? "sel" : ""}">${l === "S" ? "" : l}</th>`).join("");

const head = top4.map((row, r) => `<tr class="${r < 2 ? "tall" : ""}"><th scope="row">${r + 1}</th>` +
  row.map(v => cell(v, /^\d+$/.test(v) ? "n r" : /^Chap/.test(v) ? "n" : "")).join("") + "</tr>");

const body = data.map(([id, name, exam, work], r) => {
  const sel = r < 21 ? "sel" : "";
  return `<tr><th scope="row" class="${sel}">${r + 5}</th>` +
    cell(`<span class="d">19</span>能源化学工程<span class="d">1</span>班`, r === 0 ? "" : sel) +
    cell(id, `n tri ${sel}`) + cell(name, sel) + cell("") +
    exam.split(" ").map(v => cell(v + ".0", "n tri")).join("") +
    work.split(" ").map(v => cell(v, "n r")).join("") + cell("") + "</tr>";
});
document.getElementById("rows").innerHTML = head.concat(body).join("");
```
